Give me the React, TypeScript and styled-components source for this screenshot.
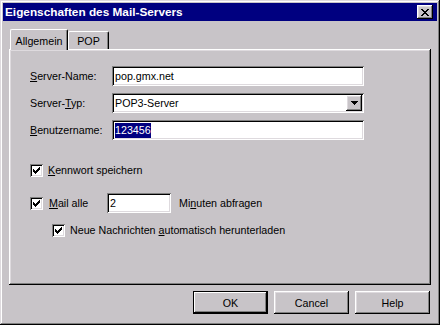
import styled, {createGlobalStyle} from 'styled-components';

const colors = {
  face: '#c8c4c8',
  light: '#ffffff',
  shadow: '#808080',
  dark: '#000000',
  title: '#000080',
};

const GlobalStyle = createGlobalStyle`
  html, body {
    margin: 0;
    padding: 0;
    background: ${colors.face};
  }
  body {
    font-family: "Liberation Sans", Arial, sans-serif;
    font-size: 10.7px;
    color: #000;
  }
`;

const raised = `
  box-shadow: inset -1px -1px ${colors.dark}, inset 1px 1px ${colors.light},
    inset -2px -2px ${colors.shadow}, inset 2px 2px #dedade;
`;

const sunken = `
  box-shadow: inset 1px 1px ${colors.shadow}, inset -1px -1px ${colors.light},
    inset 2px 2px ${colors.dark}, inset -2px -2px #dedade;
`;

const Window = styled.div`
  box-sizing: border-box;
  width: 440px;
  height: 325px;
  padding: 3px;
  background: ${colors.face};
  box-shadow: inset -1px -1px ${colors.dark}, inset 1px 1px #dedade,
    inset -2px -2px ${colors.shadow}, inset 2px 2px ${colors.light};
  display: flex;
  flex-direction: column;
`;

const TitleBar = styled.div`
  height: 18px;
  flex-shrink: 0;
  background: ${colors.title};
  color: #fff;
  font-weight: bold;
  font-size: 11.8px;
  padding: 0 4px 0 2px;
  display: flex;
  align-items: center;
  justify-content: space-between;
`;

const CloseButton = styled.div`
  width: 16px;
  height: 14px;
  background: ${colors.face};
  ${raised}
  display: flex;
  align-items: center;
  justify-content: center;
`;

const Body = styled.div`
  flex: 1;
  padding: 8px 6px 8px 6px;
  display: flex;
  flex-direction: column;
`;

const TabRow = styled.div`
  height: 20px;
  padding-left: 1px;
  display: flex;
  align-items: flex-end;
  position: relative;
  z-index: 1;
`;

const Tab = styled.div<{$active?: boolean; $width: number}>`
  box-sizing: border-box;
  width: ${({$width}) => $width}px;
  height: ${({$active}) => ($active ? 21 : 18)}px;
  margin-bottom: ${({$active}) => ($active ? -1 : 0)}px;
  padding-top: ${({$active}) => ($active ? 1 : 0)}px;
  background: ${colors.face};
  border-top: 1px solid ${colors.light};
  border-left: 1px solid ${colors.light};
  border-right: 1px solid ${colors.dark};
  border-radius: 2px 2px 0 0;
  box-shadow: inset -1px 0 ${colors.shadow};
  display: flex;
  align-items: center;
  justify-content: center;
  white-space: nowrap;
`;

const Panel = styled.div`
  box-sizing: border-box;
  height: 236px;
  padding: 17px 0 0 21px;
  background: ${colors.face};
  ${raised}
  display: flex;
  flex-direction: column;
`;

const FormGrid = styled.div`
  display: grid;
  grid-template-columns: 82px 252px;
  grid-auto-rows: 20px;
  row-gap: 7px;
  align-items: center;
`;

const Label = styled.span`
  white-space: nowrap;
`;

const TextBox = styled.div<{$width?: number}>`
  box-sizing: border-box;
  width: ${({$width}) => ($width ? `${$width}px` : '100%')};
  height: 20px;
  padding: 0 3px;
  background: #fff;
  ${sunken}
  display: flex;
  align-items: center;
  white-space: nowrap;
`;

const Selected = styled.span`
  background: ${colors.title};
  color: #fff;
  line-height: 15px;
`;

const ComboBox = styled(TextBox)`
  justify-content: space-between;
  padding-right: 2px;
`;

const DropButton = styled.div`
  width: 16px;
  height: 16px;
  background: ${colors.face};
  ${raised}
  display: flex;
  align-items: center;
  justify-content: center;
`;

const CheckRow = styled.div<{$top: number; $indent?: number}>`
  margin-top: ${({$top}) => $top}px;
  padding-left: ${({$indent}) => $indent ?? 0}px;
  height: 20px;
  display: flex;
  align-items: center;
`;

const CheckBox = styled.div`
  width: 13px;
  height: 13px;
  flex-shrink: 0;
  background: #fff;
  ${sunken}
  margin-right: 5px;
  display: flex;
  align-items: center;
  justify-content: center;
`;

const FixedLabel = styled.span<{$width: number}>`
  width: ${({$width}) => $width}px;
  padding-left: 1px;
  white-space: nowrap;
`;

const After = styled.span`
  margin-left: 8px;
  white-space: nowrap;
`;

const Footer = styled.div`
  margin-top: 6px;
  padding-right: 1px;
  display: flex;
  justify-content: flex-end;
  gap: 6px;
`;

const Button = styled.div<{$default?: boolean}>`
  box-sizing: border-box;
  width: 75px;
  height: 23px;
  background: ${colors.face};
  display: flex;
  align-items: center;
  justify-content: center;
  ${({$default}) =>
    $default
      ? `box-shadow: inset 0 0 0 1px ${colors.dark}, inset -2px -2px ${colors.dark}, inset 2px 2px ${colors.light}, inset -3px -3px ${colors.shadow};`
      : raised}
`;

// small pixel drawings (check mark, close cross, arrow)
const Pixels = ({rows}: {rows: string[]}) => (
  <svg width={rows[0].length} height={rows.length} shapeRendering="crispEdges">
    {rows.map((row, y) =>
      row.split('').map((c, x) =>
        c === 'X' ? <rect key={`${x}-${y}`} x={x} y={y} width={1} height={1} fill="#000" /> : null,
      ),
    )}
  </svg>
);

const checkMark = [
  '......X',
  '.....XX',
  'X...XXX',
  'XX.XXX.',
  'XXXXX..',
  '.XXX...',
  '..X....',
];

const cross = [
  'XX....XX',
  '.XX..XX.',
  '..XXXX..',
  '...XX...',
  '..XXXX..',
  '.XX..XX.',
  'XX....XX',
];

const arrow = ['XXXXXXX', '.XXXXX.', '..XXX..', '...X...'];

const Check = () => (
  <CheckBox>
    <Pixels rows={checkMark} />
  </CheckBox>
);

export default function App() {
  return (
    <>
      <GlobalStyle />
      <Window>
        <TitleBar>
          <span>Eigenschaften des Mail-Servers</span>
          <CloseButton>
            <Pixels rows={cross} />
          </CloseButton>
        </TitleBar>
        <Body>
          <TabRow>
            <Tab $active $width={58}>Allgemein</Tab>
            <Tab $width={41}>POP</Tab>
          </TabRow>
          <Panel>
            <FormGrid>
              <Label>
                <u>S</u>erver-Name:
              </Label>
              <TextBox>pop.gmx.net</TextBox>
              <Label>
                Server-<u>T</u>yp:
              </Label>
              <ComboBox>
                <span>POP3-Server</span>
                <DropButton>
                  <Pixels rows={arrow} />
                </DropButton>
              </ComboBox>
              <Label>
                <u>B</u>enutzername:
              </Label>
              <TextBox>
                <Selected>123456</Selected>
              </TextBox>
            </FormGrid>
            <CheckRow $top={20}>
              <Check />
              <span>
                <u>K</u>ennwort speichern
              </span>
            </CheckRow>
            <CheckRow $top={13}>
              <Check />
              <FixedLabel $width={58}>
                <u>M</u>ail alle
              </FixedLabel>
              <TextBox $width={64}>2</TextBox>
              <After>
                Mi<u>n</u>uten abfragen
              </After>
            </CheckRow>
            <CheckRow $top={7} $indent={22}>
              <Check />
              <span>
                Neue Nachrichten <u>a</u>utomatisch herunterladen
              </span>
            </CheckRow>
          </Panel>
          <Footer>
            <Button $default>OK</Button>
            <Button>Cancel</Button>
            <Button>Help</Button>
          </Footer>
        </Body>
      </Window>
    </>
  );
}
